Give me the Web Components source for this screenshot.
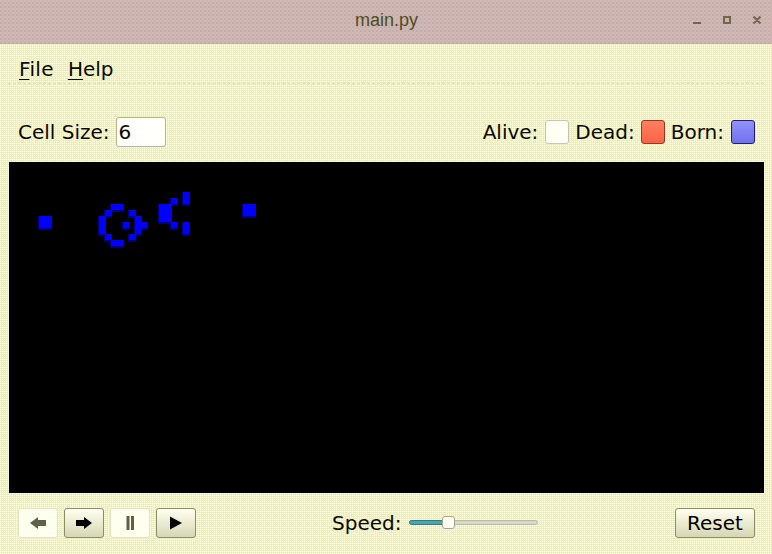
<!DOCTYPE html>
<html><head><meta charset="utf-8"><title>main.py</title>
<style>html,body{margin:0;height:100%;overflow:hidden}</style></head><body>
<life-window></life-window>
<script>
const define=(name,html,init)=>customElements.define(name,class extends HTMLElement{
 connectedCallback(){ if(this.shadowRoot)return; const r=this.attachShadow({mode:'open'}); const t=document.createElement('template'); t.innerHTML=html; r.append(t.content.cloneNode(true)); if(init)init(this,r);}
});
define('title-bar',`<style>
:host{display:grid;grid-template-columns:1fr auto 1fr;height:44px;box-sizing:border-box;padding:0 7px 4px 8px;align-items:center;font:18px "Liberation Sans",Arial,sans-serif;color:#4d4d20;
background-color:#cdb4ae;background-image:conic-gradient(#c8b4b4 25%,#d2b6ae 0 50%,#bcaeb4 0 75%,#d6b8ac 0);background-size:4px 4px}
span{grid-column:2}svg{justify-self:end;grid-column:3;display:block}
</style><span><slot></slot></span><svg width="75" height="12" fill="none" stroke="#73664f" stroke-width="2"><path d="M3 9h8M34 3h6v6h-6zM63.500 2.500l7 7M70.500 2.500l-7 7"/></svg>`);
define('menu-bar',`<style>:host{display:flex;gap:14px;margin:0 8px;padding:12px 0 0 11px;height:40px;box-sizing:border-box;border-bottom:1px dashed #dcdcc4;line-height:26px}</style><slot></slot>`);
define('menu-item',`<style>:host{display:block}:host([key=F]){letter-spacing:.35px}u{text-decoration-thickness:1px;text-underline-offset:3px}</style><u></u><slot></slot>`,(h,r)=>r.querySelector('u').textContent=h.getAttribute('key'));
define('size-field',`<style>:host{display:block;box-sizing:border-box;width:50px;height:30px;border:1px solid #b5b59a;border-radius:3px;background:#fffffb;padding:0 2px;line-height:29px}</style><slot></slot>`);
define('color-swatch',`<style>:host{display:block;box-sizing:border-box;width:24px;height:24px;margin:0 6px 0 7px;border:1px solid;border-radius:3px}
:host([kind=alive]){background:#fffff4;border-color:#c4c4b8}
:host([kind=dead]){background:linear-gradient(#ff8060,#fb6248);border-color:#9b3522;margin-left:6px}
:host([kind=born]){background:linear-gradient(#9292f7,#7171ef);border-color:#1b1b78;margin-right:0}</style>`);
define('tool-button',`<style>:host{display:flex;align-items:center;justify-content:center;box-sizing:border-box;width:40px;height:30px;border:1px solid #8c8c69;border-radius:3px;background:linear-gradient(#fffff1,#e9e9ce 55%,#d6d6b4);color:#000}
:host([disabled]){background:#fffff0;border-color:#e3e3c5;color:#606047}:host([wide]){width:80px}</style><slot></slot>`);
define('speed-slider',`<style>:host{display:grid;align-items:center;width:129px;height:16px;margin:0 0 2px 8px}
.track,.thumb{grid-area:1/1;box-sizing:border-box}.track{height:5px;border:1px solid #b9b9a1;border-radius:3px;background:#d8d8c4}
.fill{grid-area:1/1;box-sizing:border-box;width:40px;height:5px;border:1px solid #307d80;border-radius:3px;background:#4aa6ab}
.thumb{width:13px;height:13px;margin-left:33px;border:1px solid #a4a48e;border-radius:3px;background:#fffff4}</style><div class="track"></div><div class="fill"></div><div class="thumb"></div>`);
define('life-board',`<style>:host{display:block;width:755px;height:331px;background:#000}svg{display:block}</style><svg width="755" height="331" shape-rendering="crispEdges"></svg>`,(h,r)=>{
 const cells=[[5,9,2,2],[17,7,2,1],[16,8,1,1],[20,8,1,1],[15,9,1,3],[21,9,1,3],[22,10,1,1],[19,10,1,1],[16,12,1,1],[20,12,1,1],[17,13,2,1],[25,7,2,3],[27,6,1,1],[29,5,1,2],[27,10,1,1],[29,10,1,2],[39,7,2,2]];
 const svg=r.querySelector('svg');
 for(const [fill,o] of [['#000078',0],['#0000ff',1]]) for(const [x,y,w,ht] of cells){
  const e=document.createElementNS('http://www.w3.org/2000/svg','rect');
  e.setAttribute('x',x*6-1+o);e.setAttribute('y',y*6);e.setAttribute('width',w*6+2-o);e.setAttribute('height',ht*6+2-2*o);e.setAttribute('fill',fill);svg.append(e);}
});
define('life-window',`<style>
:host{display:flex;flex-direction:column;width:772px;height:554px;overflow:hidden;color:#090900;font:20px "DejaVu Sans",sans-serif;background-color:#f3f3bd;background-image:conic-gradient(#e8e8d0 25%,#f2f2a8 0 50%,#fffffa 0 75%,#f2f2a8 0);background-size:2px 2px}
.row{display:flex;align-items:center}.top{height:78px;box-sizing:border-box;padding:18px 17px 0 18px}.grow{flex:1}size-field{margin-left:6px}
life-board{margin-left:9px}.bottom{height:61px;box-sizing:border-box;padding:0 17px 1px 18px;display:grid;grid-template-columns:314px 1fr auto;align-items:center}.buttons{display:flex;gap:6px}svg{display:block}
</style>
<title-bar>main.py</title-bar><menu-bar><menu-item key="F">ile</menu-item><menu-item key="H">elp</menu-item></menu-bar>
<div class="row top"><span>Cell Size:</span><size-field>6</size-field><span class="grow"></span><span>Alive:</span><color-swatch kind="alive"></color-swatch><span>Dead:</span><color-swatch kind="dead"></color-swatch><span>Born:</span><color-swatch kind="born"></color-swatch></div>
<life-board></life-board>
<div class="bottom"><div class="buttons">
<tool-button disabled><svg width="16" height="14" fill="currentColor"><path d="M0 7L8 1V4H16V10H8V13Z"/></svg></tool-button>
<tool-button><svg width="16" height="14"><path d="M16 7L8 1V4H0V10H8V13Z"/></svg></tool-button>
<tool-button disabled><svg width="8" height="14" fill="currentColor"><path d="M0.500 0h3v14h-3zM5 0h3v14h-3z"/></svg></tool-button>
<tool-button><svg width="12" height="14"><path d="M0 .5L12 7L0 13.500Z"/></svg></tool-button></div>
<div class="row"><span>Speed:</span><speed-slider></speed-slider></div><tool-button wide>Reset</tool-button></div>`);
</script></body></html>
